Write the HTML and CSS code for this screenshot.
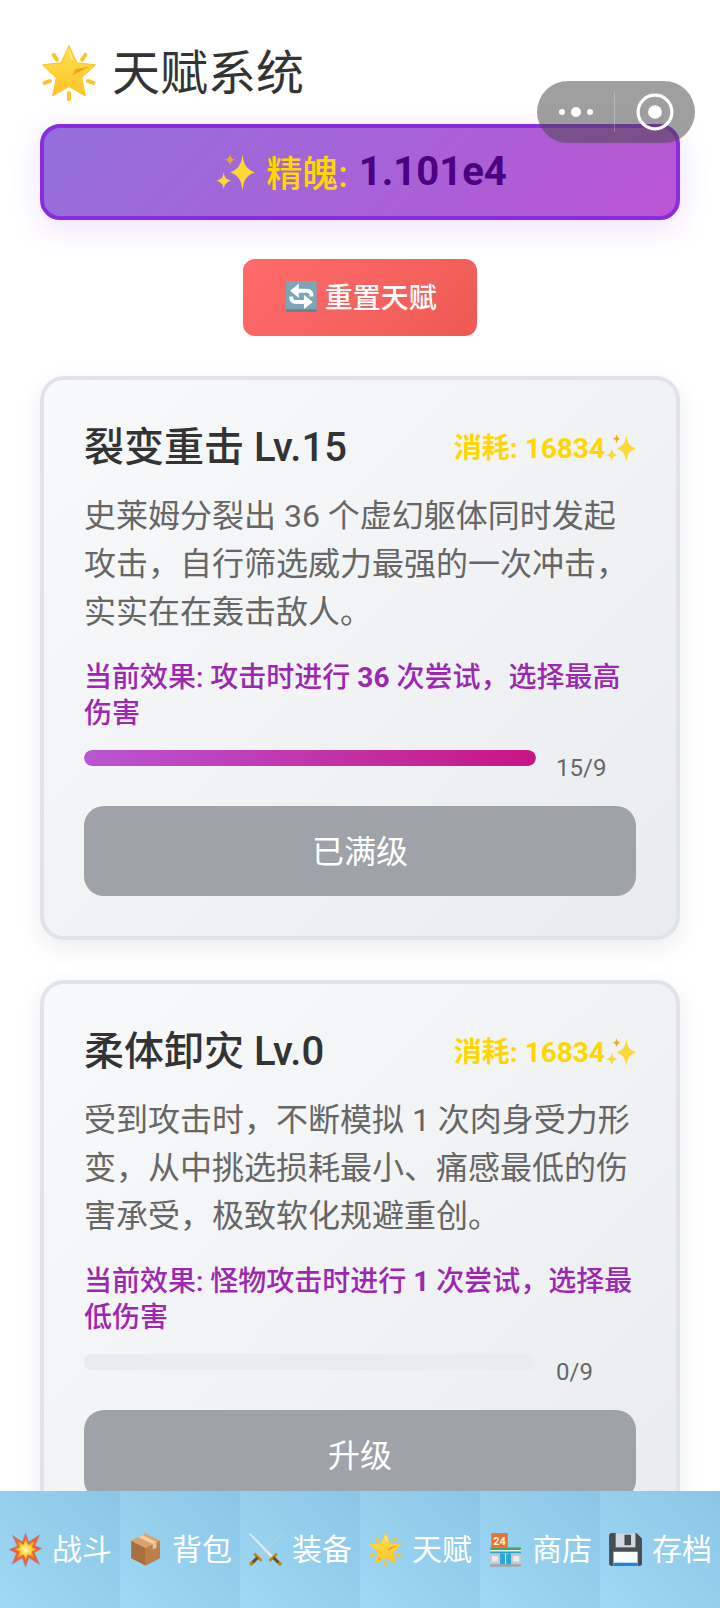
FILE: index.html
```html
<!DOCTYPE html>
<html lang="zh-CN">
<head>
<meta charset="utf-8">
<title>天赋系统</title>
<link rel="stylesheet" href="styles.css">
</head>
<body>
<svg class="defs" width="0" height="0" aria-hidden="true">
  <defs>
    <linearGradient id="g-star" x1="0" y1="0" x2="0" y2="1"><stop offset="0" stop-color="#ffe04a"/><stop offset="1" stop-color="#fdc42c"/></linearGradient>
    <radialGradient id="g-boom"><stop offset="0" stop-color="#fffbd0"/><stop offset=".45" stop-color="#ffd838"/><stop offset="1" stop-color="#f98a1e"/></radialGradient>
    <symbol id="i-star" viewBox="0 0 32 32">
      <g stroke="#f9c42d" stroke-width="2.200" stroke-linecap="round">
        <path d="M7.500 6l1.800 2.600M25 6l-1.800 2.600M2.500 21.500l3-1M29.500 21.500l-3-1M16 27v3.500"/>
      </g>
      <path d="M16 1l4.300 9.300 10.200 1.200-7.500 7 2 10-9-5-9 5 2-10-7.500-7 10.200-1.200z" fill="url(#g-star)" stroke="#fdc42c" stroke-width=".6" stroke-linejoin="round"/>
      <path d="M27.500 12.500l-8 1.300-1.500 3.400 2.500-1.300z" fill="#f2a31f"/>
      <path d="M16 2.500l2.500 6.500-1.500-.4z" fill="#fff1a6"/>
    </symbol>
    <symbol id="i-spark" viewBox="0 0 32 32">
      <path d="M22 2.500c1 9 3.500 12 10 14.500-6.500 2.500-9 5.500-10 14.500-1-9-3.500-12-10-14.500 6.500-2.500 9-5.500 10-14.500z" fill="#fdd835"/>
      <path d="M7 17c.6 4.300 1.900 5.700 6 6.800-4.100 1.200-5.400 2.700-6 6.900-.6-4.200-1.900-5.700-6-6.900 4.100-1.100 5.400-2.500 6-6.800z" fill="#fdd835"/>
      <path d="M12 2c.4 3 1.300 4.200 4 5-2.700.8-3.600 2-4 5-.4-3-1.300-4.200-4-5 2.700-.8 3.600-2 4-5z" fill="#eeaa22"/>
    </symbol>
    <symbol id="i-reset" viewBox="0 0 32 32">
      <rect x="1" y="1" width="30" height="30" rx="1.500" fill="#7ba5b8"/>
      <rect x="1" y="28.800" width="30" height="2.200" fill="#667d89"/>
      <g fill="none" stroke="#fff" stroke-width="3.800">
        <path d="M12 10.500h9.500c3 0 4.500 2 4.500 5.500"/>
        <path d="M20 21.500h-9.500c-3 0-4.500-2-4.500-5.500"/>
      </g>
      <path d="M13.500 3.500L5 10.500l8.500 7zM18.500 14.500l8.500 7-8.500 7z" fill="#fff"/>
    </symbol>
    <symbol id="i-boom" viewBox="0 0 32 32">
      <path d="M16 1l2.800 8.200L29 2.500l-4.500 10L31 15l-7 3.800 4.700 10.700-9.700-6-2.900 8.500-3.100-8.300-9.500 5.700 4.300-10.100L1 16l7.600-3.200L4 3l9 6.200z" fill="#e5623a" stroke="#b58a96" stroke-width=".7"/>
      <path d="M16 6l2.400 6 6-4-2.600 6 4.700 2-5 1.900 2.800 6.300-6.200-3.800-1.900 5.500-2-5.400-6 3.500 2.700-6.200-5-2 5-1.900-2.900-6.200 6.100 4z" fill="url(#g-boom)"/>
    </symbol>
    <symbol id="i-box" viewBox="0 0 32 32">
      <path d="M16 1.500l13 6.500v16l-13 6.500L3 24V8z" fill="#c98a50"/>
      <path d="M3 8l13 6.500v16L3 24z" fill="#a9703e"/>
      <path d="M29 8l-13 6.500v16l13-6.500z" fill="#bd7f47"/>
      <path d="M16 1.500l13 6.500-13 6.500L3 8z" fill="#dba36c"/>
      <path d="M9.500 4.500l13 6.500 3.500-1.700-13-6.500z" fill="#f2cfa8"/>
      <path d="M22.500 11l3.500-1.700v5l-3.500 1.700z" fill="#e7c19b"/>
    </symbol>
    <symbol id="i-swords" viewBox="0 0 32 32">
      <path d="M30 1L8.700 22.200l1.800 1.800L31 2z" fill="#b9cdd8"/>
      <path d="M2 1l21.300 21.200-1.800 1.800L1 2z" fill="#e0ebf1"/>
      <g stroke-linecap="round" stroke-width="2.800" fill="none">
        <path d="M6.500 20.500l5 5M25.500 20.500l-5 5" stroke="#b88a2c"/>
        <path d="M8 24l-4.500 4.500M24 24l4.500 4.500" stroke="#6d4c26"/>
      </g>
      <circle cx="3" cy="29" r="1.800" fill="#b88a2c"/><circle cx="29" cy="29" r="1.800" fill="#b88a2c"/>
    </symbol>
    <symbol id="i-store" viewBox="0 0 32 32">
      <rect x="3" y="1" width="15" height="13" fill="#e8703a"/>
      <text class="store-num" x="10.500" y="11.500">24</text>
      <rect x="2" y="14" width="28" height="2.500" fill="#43a85b"/>
      <rect x="2" y="16.500" width="28" height="1.300" fill="#f4f6f7"/>
      <rect x="2" y="17.800" width="28" height="1.700" fill="#2a9fd6"/>
      <rect x="2" y="19.500" width="28" height="12" fill="#c3c9cd"/>
      <rect x="11" y="19.500" width="10" height="10" fill="#26a9d9"/>
      <path d="M16 19.500v10" stroke="#e4f4fa" stroke-width="1"/>
      <rect x="3.500" y="22" width="5.500" height="5" fill="#e8ecee"/><rect x="23" y="22" width="5.500" height="5" fill="#e8ecee"/>
      <rect x="2" y="29.500" width="28" height="2" fill="#9aa2a7"/>
    </symbol>
    <symbol id="i-save" viewBox="0 0 32 32">
      <path d="M3.500 1H26l5 5v22.500a2.500 2.500 0 0 1-2.500 2.500h-25A2.500 2.500 0 0 1 1 28.500v-25A2.500 2.500 0 0 1 3.500 1z" fill="#484e54"/>
      <rect x="7" y="1" width="18" height="13" fill="#d4d8db"/>
      <rect x="15" y="2.500" width="6" height="9.500" fill="#484e54"/>
      <rect x="5" y="18" width="22" height="13" fill="#fbfcfd"/>
      <rect x="5" y="28" width="22" height="3" fill="#1e88d8"/>
    </symbol>
  </defs>
</svg>

<main class="page">
  <h1 class="title"><svg class="emoji title-emoji"><use href="#i-star"/></svg>天赋系统</h1>

  <div class="essence">
    <svg class="emoji essence-emoji"><use href="#i-spark"/></svg><span>精魄:</span><span class="essence-value">1.101e4</span>
  </div>

  <div class="reset-wrap">
    <button class="reset"><svg class="emoji"><use href="#i-reset"/></svg> 重置天赋</button>
  </div>

  <section class="card">
    <header class="card-head">
      <h2 class="card-title">裂变重击 Lv.15</h2>
      <span class="cost">消耗: 16834<svg class="emoji"><use href="#i-spark"/></svg></span>
    </header>
    <p class="desc">史莱姆分裂出 36 个虚幻躯体同时发起攻击，自行筛选威力最强的一次冲击，实实在在轰击敌人。</p>
    <p class="effect">当前效果: 攻击时进行 <span class="num">36</span> 次尝试，选择最高<br>伤害</p>
    <div class="progress">
      <div class="track"><div class="fill"></div></div>
      <span class="count">15/9</span>
    </div>
    <button class="action">已满级</button>
  </section>

  <section class="card">
    <header class="card-head">
      <h2 class="card-title">柔体卸灾 Lv.0</h2>
      <span class="cost">消耗: 16834<svg class="emoji"><use href="#i-spark"/></svg></span>
    </header>
    <p class="desc">受到攻击时，不断模拟 1 次肉身受力形变，从中挑选损耗最小、痛感最低的伤害承受，极致软化规避重创。</p>
    <p class="effect">当前效果: 怪物攻击时进行 <span class="num">1</span> 次尝试，选择最<br>低伤害</p>
    <div class="progress">
      <div class="track"></div>
      <span class="count">0/9</span>
    </div>
    <button class="action">升级</button>
  </section>
</main>

<nav class="tabs">
  <a class="tab"><svg class="emoji"><use href="#i-boom"/></svg><span class="tab-label">战斗</span></a>
  <a class="tab"><svg class="emoji"><use href="#i-box"/></svg><span class="tab-label">背包</span></a>
  <a class="tab"><svg class="emoji"><use href="#i-swords"/></svg><span class="tab-label">装备</span></a>
  <a class="tab"><svg class="emoji"><use href="#i-star"/></svg><span class="tab-label">天赋</span></a>
  <a class="tab"><svg class="emoji"><use href="#i-store"/></svg><span class="tab-label">商店</span></a>
  <a class="tab"><svg class="emoji"><use href="#i-save"/></svg><span class="tab-label">存档</span></a>
</nav>

<div class="capsule">
  <svg class="capsule-more" viewBox="0 0 36 12"><circle cx="4" cy="6" r="3"/><circle cx="18" cy="6" r="5"/><circle cx="32" cy="6" r="3"/></svg>
  <span class="capsule-sep"></span>
  <svg class="capsule-target" viewBox="0 0 36 36"><circle cx="18" cy="18" r="16" fill="none" stroke="#fff" stroke-width="3"/><circle cx="18" cy="18" r="6.500" fill="#fff"/></svg>
</div>
</body>
</html>
```
FILE: styles.css
```css
* { box-sizing: border-box; }
html, body { margin: 0; height: 100%; overflow: hidden; background: #fff; }
body { font-family: Roboto, "Noto Sans CJK SC", sans-serif; color: #333; }
.defs { position: absolute; }
.emoji { display: inline-block; width: 1.17em; height: 1.17em; vertical-align: -0.18em; }
.store-num { font: 700 10px Roboto, sans-serif; fill: #fff6d0; text-anchor: middle; }
.num { font-weight: 700; }

.page { padding: 40px; }
.title { height: 68px; margin: 0 0 16px; font-size: 48px; line-height: 68px; font-weight: 400; color: #333; }
.title-emoji { width: 58px; height: 58px; margin-right: 14px; vertical-align: -12px; }
.essence {
  height: 96px; padding: 0 0 2px 2px; display: flex; align-items: center; justify-content: center; gap: 11px;
  font-size: 36px; font-weight: 500; color: #ffd700;
  background: linear-gradient(135deg, #9370db, #ba55d3);
  border: 4px solid #8a2be2; border-radius: 20px;
  box-shadow: 0 8px 32px rgba(138, 43, 226, 0.14);
}
.essence-emoji { width: 40px; height: 40px; }
.essence-value { color: #4b0082; font-size: 40px; font-weight: 700; }
.reset-wrap { display: flex; justify-content: center; margin: 39px 0 40px; }
.reset {
  width: 234px; height: 77px; border: 0; border-radius: 12px; padding: 0 0 3px 2px;
  font: 500 28px Roboto, "Noto Sans CJK SC", sans-serif; color: #fff;
  background: linear-gradient(135deg, #ff6b6b, #ee5a52);
}
.card {
  margin-bottom: 40px; padding: 40px; border: 4px solid #e0e3e9; border-radius: 24px;
  background: linear-gradient(135deg, #f8f9fa, #e9ecef);
  box-shadow: 0 8px 24px rgba(0, 0, 0, 0.08);
}
.card-head { display: flex; justify-content: space-between; align-items: center; margin-bottom: 16px; }
.card-title { margin: 0; font-size: 40px; line-height: 56px; font-weight: 500; color: #333; }
.cost { padding-bottom: 4px; font-size: 28px; font-weight: 700; color: #ffd700; }
.cost .emoji { width: 31px; height: 31px; }
.desc { margin: 0 0 24px; font-size: 32px; line-height: 48px; color: #666; }
.effect { margin: 0 0 14px; font-size: 28px; line-height: 36px; font-weight: 500; color: #9c27b0; }
.progress { display: flex; gap: 20px; margin-bottom: 20px; }
.track { width: 452px; height: 16px; border-radius: 8px; background: #e9ecef; overflow: hidden; margin-top: 4px; }
.fill { height: 100%; background: linear-gradient(90deg, #ba55d3, #c71585); border-radius: 8px; }
.count { font-size: 24px; line-height: 36px; color: #666; padding-top: 4px; }
.action {
  display: block; width: 100%; height: 90px; border: 0; border-radius: 20px; padding: 0 0 4px;
  font: 400 32px Roboto, "Noto Sans CJK SC", sans-serif; color: #fff; background: #9ea3aa;
}
.tabs { position: fixed; left: 0; right: 0; bottom: 0; height: 117px; display: flex; }
.tab {
  flex: 1; display: flex; align-items: center; justify-content: center; gap: 9px; white-space: nowrap;
  font-size: 30px; font-weight: 400; color: #fff;
  background: linear-gradient(45deg, #a0d8f6, #89c6e6);
}
.tab-label { padding-bottom: 6px; }
.capsule {
  position: fixed; left: 537px; top: 81px; width: 158px; height: 62px; border-radius: 31px;
  display: flex; align-items: center; background: rgba(70, 70, 70, 0.52);
}
.capsule-more { width: 36px; height: 12px; margin-left: 21px; fill: #fff; }
.capsule-sep { width: 1px; height: 40px; margin-left: 20px; background: rgba(255, 255, 255, 0.25); }
.capsule-target { width: 38px; height: 38px; margin-left: 21px; }
```
